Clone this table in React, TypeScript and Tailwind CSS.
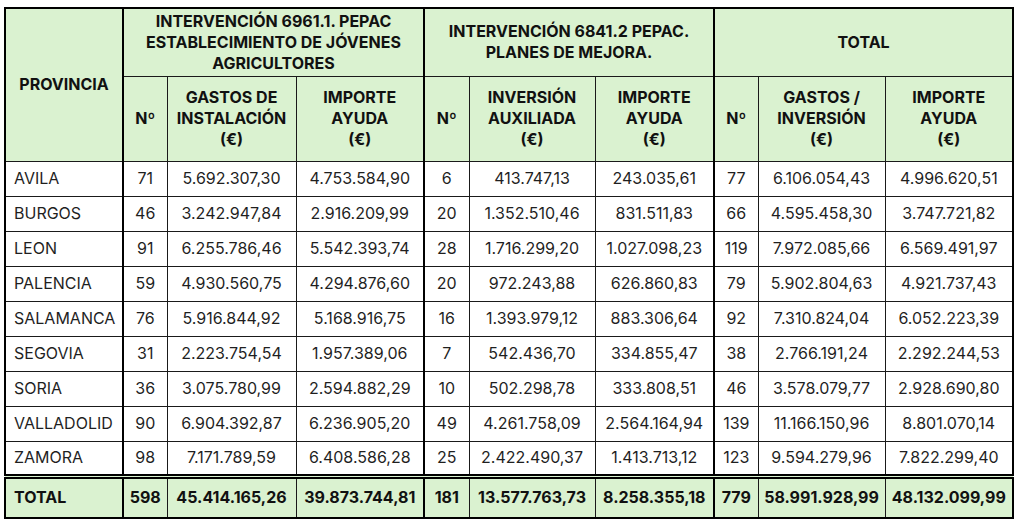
const rows = [
  ["AVILA", "71", "5.692.307,30", "4.753.584,90", "6", "413.747,13", "243.035,61", "77", "6.106.054,43", "4.996.620,51"],
  ["BURGOS", "46", "3.242.947,84", "2.916.209,99", "20", "1.352.510,46", "831.511,83", "66", "4.595.458,30", "3.747.721,82"],
  ["LEON", "91", "6.255.786,46", "5.542.393,74", "28", "1.716.299,20", "1.027.098,23", "119", "7.972.085,66", "6.569.491,97"],
  ["PALENCIA", "59", "4.930.560,75", "4.294.876,60", "20", "972.243,88", "626.860,83", "79", "5.902.804,63", "4.921.737,43"],
  ["SALAMANCA", "76", "5.916.844,92", "5.168.916,75", "16", "1.393.979,12", "883.306,64", "92", "7.310.824,04", "6.052.223,39"],
  ["SEGOVIA", "31", "2.223.754,54", "1.957.389,06", "7", "542.436,70", "334.855,47", "38", "2.766.191,24", "2.292.244,53"],
  ["SORIA", "36", "3.075.780,99", "2.594.882,29", "10", "502.298,78", "333.808,51", "46", "3.578.079,77", "2.928.690,80"],
  ["VALLADOLID", "90", "6.904.392,87", "6.236.905,20", "49", "4.261.758,09", "2.564.164,94", "139", "11.166.150,96", "8.801.070,14"],
  ["ZAMORA", "98", "7.171.789,59", "6.408.586,28", "25", "2.422.490,37", "1.413.713,12", "123", "9.594.279,96", "7.822.299,40"],
]

const total = ["TOTAL", "598", "45.414.165,26", "39.873.744,81", "181", "13.577.763,73", "8.258.355,18", "779", "58.991.928,99", "48.132.099,99"]

// columns where a new group starts get the heavier left line
const groupStart = [1, 4, 7]

function App() {
  const cellBase = "border border-[#1a1a1a] px-1"

  return (
    <div className="pl-1 pt-[7px] bg-white" style={{ fontFamily: "Inter, 'Noto Sans', sans-serif" }}>
      <table className="border-collapse border-2 border-black table-fixed w-[1008px] text-[16px] leading-[21px]">
        <colgroup>
          <col className="w-[118px]" />
          <col className="w-[44px]" />
          <col className="w-[129px]" />
          <col className="w-[128px]" />
          <col className="w-[45px]" />
          <col className="w-[126px]" />
          <col className="w-[119px]" />
          <col className="w-[44px]" />
          <col className="w-[127px]" />
          <col className="w-[128px]" />
        </colgroup>
        <thead className="bg-[#daf2d0] text-[#111] font-bold">
          <tr className="h-[68px]">
            <th rowSpan={2} className={`${cellBase} border-r-2 border-r-black`}>PROVINCIA</th>
            <th colSpan={3} className={`${cellBase} border-l-2 border-l-black`}>
              INTERVENCIÓN 6961.1. PEPAC
              <br />
              ESTABLECIMIENTO DE JÓVENES
              <br />
              AGRICULTORES
            </th>
            <th colSpan={3} className={`${cellBase} border-l-2 border-l-black`}>
              INTERVENCIÓN 6841.2 PEPAC.
              <br />
              PLANES DE MEJORA.
            </th>
            <th colSpan={3} className={`${cellBase} border-l-2 border-l-black`}>TOTAL</th>
          </tr>
          <tr className="h-[85px]">
            <th className={`${cellBase} border-l-2 border-l-black`}>Nº</th>
            <th className={cellBase}>GASTOS DE<br />INSTALACIÓN<br />(€)</th>
            <th className={cellBase}>IMPORTE<br />AYUDA<br />(€)</th>
            <th className={`${cellBase} border-l-2 border-l-black`}>Nº</th>
            <th className={cellBase}>INVERSIÓN<br />AUXILIADA<br />(€)</th>
            <th className={cellBase}>IMPORTE<br />AYUDA<br />(€)</th>
            <th className={`${cellBase} border-l-2 border-l-black`}>Nº</th>
            <th className={cellBase}>GASTOS /<br />INVERSIÓN<br />(€)</th>
            <th className={cellBase}>IMPORTE<br />AYUDA<br />(€)</th>
          </tr>
        </thead>
        <tbody className="text-[#1f1f1f]">
          {rows.map((r) => (
            <tr key={r[0]} className="h-[35px]">
              {r.map((v, i) => (
                <td
                  key={i}
                  className={`${cellBase} ${i === 0 ? "text-left pl-2" : "text-center"} ${
                    groupStart.includes(i) ? "border-l-2 border-l-black" : ""
                  }`}
                >
                  {v}
                </td>
              ))}
            </tr>
          ))}
          <tr className="h-[42px] bg-[#daf2d0] font-bold text-[#111]">
            {total.map((v, i) => (
              <td
                key={i}
                className={`${cellBase} border-t-[5px] border-t-black border-double ${
                  i === 0 ? "text-left pl-2" : "text-center"
                } ${groupStart.includes(i) ? "border-l-2 border-l-black" : ""}`}
              >
                {v}
              </td>
            ))}
          </tr>
        </tbody>
      </table>
    </div>
  )
}

export default App
